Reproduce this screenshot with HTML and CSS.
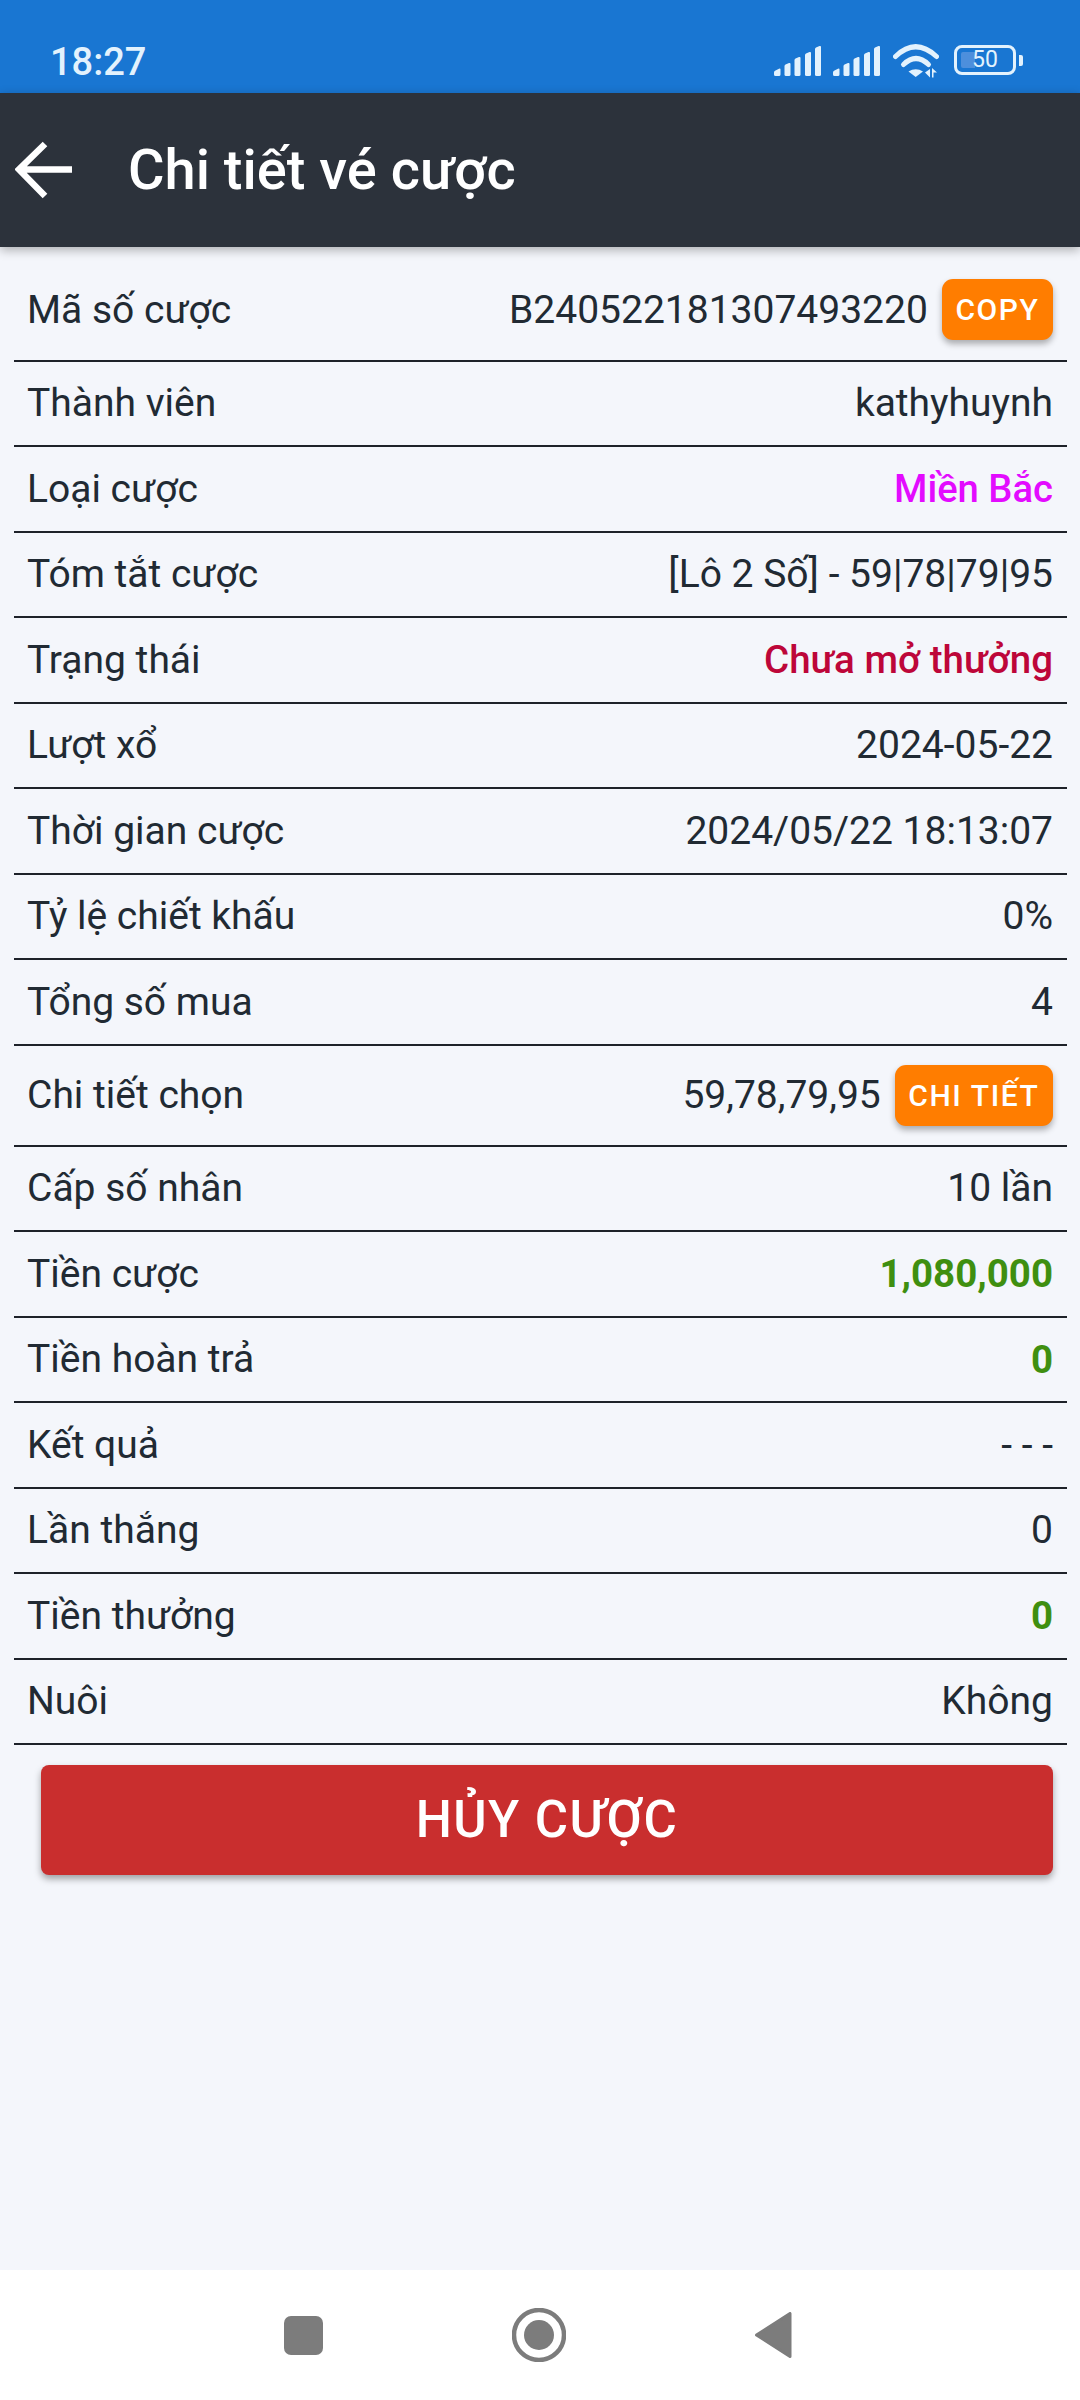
FILE: index.html
```html
<!DOCTYPE html>
<html lang="vi">
<head>
<meta charset="utf-8">
<title>Chi tiết vé cược</title>
<link rel="stylesheet" href="styles.css">
</head>
<body>
<div class="screen">
  <div class="status">
    <span class="time">18:27</span>
    <div class="status-icons">
      <svg class="sig" viewBox="0 0 47 30"><g fill="#e3f2fd"><path d="M0 26.500Q0 25 1.500 24.500L5 22.700Q6.500 22 6.500 23.500V28.500Q6.500 30 5 30H1.500Q0 30 0 28.500z"/><path d="M10.500 20Q10.500 19 11.500 18.500L15 17Q16.500 16.500 16.500 18V28.500Q16.500 30 15 30H12Q10.500 30 10.500 28.500z"/><path d="M20.500 14Q20.500 13 21.500 12.500L25 11Q26.500 10.500 26.500 12V28.500Q26.500 30 25 30H22Q20.500 30 20.500 28.500z"/><path d="M31 9Q31 8 32 7.500L35.500 6Q37 5.500 37 7V28.500Q37 30 35.500 30H32.500Q31 30 31 28.500z"/><path d="M41 3Q41 2 42 1.500L45.500 0Q47 -.5 47 1V28.500Q47 30 45.500 30H42.500Q41 30 41 28.500z"/></g></svg>
      <svg class="sig" viewBox="0 0 47 30"><g fill="#e3f2fd"><path d="M0 26.500Q0 25 1.500 24.500L5 22.700Q6.500 22 6.500 23.500V28.500Q6.500 30 5 30H1.500Q0 30 0 28.500z"/><path d="M10.500 20Q10.500 19 11.500 18.500L15 17Q16.500 16.500 16.500 18V28.500Q16.500 30 15 30H12Q10.500 30 10.500 28.500z"/><path d="M20.500 14Q20.500 13 21.500 12.500L25 11Q26.500 10.500 26.500 12V28.500Q26.500 30 25 30H22Q20.500 30 20.500 28.500z"/><path d="M31 9Q31 8 32 7.500L35.500 6Q37 5.500 37 7V28.500Q37 30 35.500 30H32.500Q31 30 31 28.500z"/><path d="M41 3Q41 2 42 1.500L45.500 0Q47 -.5 47 1V28.500Q47 30 45.500 30H42.500Q41 30 41 28.500z"/></g></svg>
      <svg class="wifi" viewBox="0 0 46 35"><g fill="none" stroke="#e3f2fd" stroke-width="5" stroke-linecap="round"><path d="M2.500 13.500Q22.500 -6 43.500 13.500"/><path d="M10.500 21.500Q23 9.500 35.500 21.500"/></g><path d="M15.500 28.500Q22.700 24 30 28.500L22.700 34z" fill="#e3f2fd"/><path d="M37 26V34.500L32 29.500zM39 25V34.500H40.500V29.500H44z" fill="#e3f2fd"/></svg>
      <div class="battery"><div class="batt-body"><span class="batt-fill"></span><span class="batt-num">50</span></div><span class="batt-nub"></span></div>
    </div>
  </div>
  <header class="appbar">
    <svg class="back" viewBox="0 0 58 58"><path d="M57 28.500H5M30 3L4 28.500 30 55" fill="none" stroke="#fff" stroke-width="6.500"/></svg>
    <h1 class="title">Chi tiết vé cược</h1>
  </header>
  <main class="content">
    <div class="row row-first"><span>Mã số cược</span><div class="val-wrap"><span>B240522181307493220</span><button class="mini">COPY</button></div></div>
    <div class="row"><span>Thành viên</span><span>kathyhuynh</span></div>
    <div class="row"><span>Loại cược</span><span class="magenta">Miền Bắc</span></div>
    <div class="row"><span>Tóm tắt cược</span><span>[Lô 2 Số] - 59|78|79|95</span></div>
    <div class="row"><span>Trạng thái</span><span class="crimson">Chưa mở thưởng</span></div>
    <div class="row"><span>Lượt xổ</span><span>2024-05-22</span></div>
    <div class="row"><span>Thời gian cược</span><span>2024/05/22 18:13:07</span></div>
    <div class="row"><span>Tỷ lệ chiết khấu</span><span>0%</span></div>
    <div class="row"><span>Tổng số mua</span><span>4</span></div>
    <div class="row row-btn"><span>Chi tiết chọn</span><div class="val-wrap"><span>59,78,79,95</span><button class="mini">CHI TIẾT</button></div></div>
    <div class="row"><span>Cấp số nhân</span><span>10 lần</span></div>
    <div class="row"><span>Tiền cược</span><span class="green">1,080,000</span></div>
    <div class="row"><span>Tiền hoàn trả</span><span class="green">0</span></div>
    <div class="row"><span>Kết quả</span><span>- - -</span></div>
    <div class="row"><span>Lần thắng</span><span>0</span></div>
    <div class="row"><span>Tiền thưởng</span><span class="green">0</span></div>
    <div class="row"><span>Nuôi</span><span>Không</span></div>
    <button class="cancel">HỦY CƯỢC</button>
  </main>
  <nav class="navbar">
    <svg class="nav-square" viewBox="0 0 39 39"><rect width="39" height="39" rx="7" fill="#7c7c7c"/></svg>
    <svg class="nav-circle" viewBox="0 0 54 54"><circle cx="27" cy="27" r="25" fill="none" stroke="#7c7c7c" stroke-width="4.500"/><circle cx="27" cy="27" r="15" fill="#7c7c7c"/></svg>
    <svg class="nav-tri" viewBox="0 0 37 46"><path d="M35 1.500V44.500L1.500 23z" fill="#7c7c7c" stroke="#7c7c7c" stroke-width="3" stroke-linejoin="round"/></svg>
  </nav>
</div>
</body>
</html>
```
FILE: styles.css
```css
* { box-sizing: border-box; }
html, body { margin: 0; padding: 0; }
body { font-family: Roboto, "Noto Sans", sans-serif; }
.screen { width: 1080px; height: 2400px; display: flex; flex-direction: column; background: #f4f6fb; overflow: hidden; }

.status { height: 93px; flex: none; background: #1976d2; display: flex; align-items: flex-end; justify-content: space-between; padding: 0 57px 12px 50px; }
.time { color: #e3f2fd; font-size: 38px; line-height: 38px; font-weight: 500; }
.status-icons { display: flex; align-items: flex-start; height: 35px; margin-bottom: 3px; }
.sig { width: 47px; height: 30px; margin-right: 12px; margin-top: 3px; overflow: visible; }
.wifi { width: 46px; height: 35px; margin-left: 1px; margin-right: 15px; }
.battery { display: flex; align-items: center; height: 30px; margin-top: 2px; }
.batt-body { position: relative; width: 62px; height: 30px; border: 3px solid #e3f2fd; border-radius: 8px; display: flex; align-items: center; justify-content: center; }
.batt-fill { position: absolute; left: 4px; top: 4px; bottom: 4px; width: 14px; background: #4d8fdc; border-radius: 2px 0 0 2px; }
.batt-num { position: relative; color: #e3f2fd; font-size: 23px; line-height: 24px; }
.batt-nub { width: 4px; height: 11px; margin-left: 3px; background: #e3f2fd; border-radius: 0 2px 2px 0; }

.appbar { height: 154px; flex: none; background: #2c323b; display: flex; align-items: center; padding-left: 15px; box-shadow: 0 3px 10px rgba(0,0,0,.3); position: relative; }
.back { width: 58px; height: 58px; flex: none; }
.title { margin: 0 0 0 55px; color: #fff; font-size: 56px; font-weight: 500; line-height: 64px; }

.content { flex: 1; padding: 0 13px 0 14px; }
.row { height: 85.500px; display: flex; align-items: center; justify-content: space-between; padding: 0 14px 0 13px; border-bottom: 2px solid #1e2229; color: #212a33; font-size: 39px; }
.row-first { height: 114.500px; padding-top: 13px; }
.row-btn { height: 101px; }
.val-wrap { display: flex; align-items: center; gap: 14px; }
.magenta { color: #e30bff; font-weight: 500; font-size: 38.200px; }
.crimson { color: #bd0639; font-weight: 500; font-size: 38.500px; }
.green { color: #3f8f10; font-weight: 700; font-size: 38.500px; }
.mini { height: 61px; padding: 0 13.500px; border: 0; border-radius: 11px; background: #ff7d00; color: #fff; font: 500 30px Roboto, sans-serif; letter-spacing: 1.600px; box-shadow: 0 4px 6px rgba(0,0,0,.3); }
.cancel { display: block; width: 1012px; height: 110px; margin: 20px 0 0 27px; padding-bottom: 2px; border: 0; border-radius: 8px; background: #c92e2e; color: #fff; font: 500 51px Roboto, sans-serif; letter-spacing: 1.400px; box-shadow: 0 4px 7px rgba(0,0,0,.35); }

.navbar { height: 130px; flex: none; background: #fff; position: relative; display: flex; align-items: center; padding-left: 284px; }
.nav-square { width: 39px; height: 39px; }
.nav-circle { width: 54px; height: 54px; margin-left: 189px; }
.nav-tri { width: 37px; height: 46px; margin-left: 189px; }
```
